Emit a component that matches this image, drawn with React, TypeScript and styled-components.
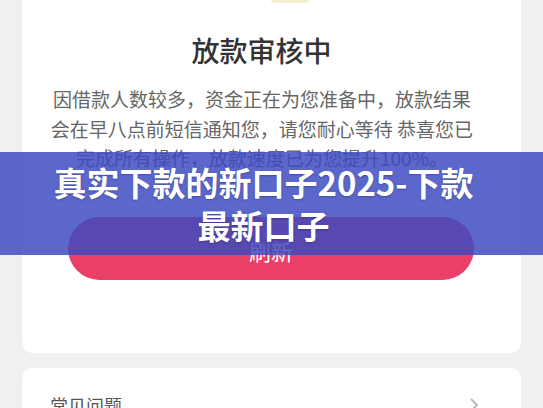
import { createGlobalStyle, styled } from "styled-components"

const GlobalStyle = createGlobalStyle`
    body {
        margin: 0;
        background: #f0f0f0;
        font-family: "Noto Sans CJK SC", "Noto Sans", sans-serif;
        overflow: hidden;
    }
`

const Page = styled.div`
    position: relative;
    width: 543px;
    height: 408px;
    overflow: hidden;
`

const Content = styled.div`
    display: flex;
    flex-direction: column;
    gap: 15px;
    padding: 0 22px;
`

const Card = styled.div`
    background: #fff;
    border-radius: 0 0 10px 10px;
    display: flex;
    flex-direction: column;
    align-items: center;
    padding: 0 0 73px;
`

const IconTail = styled.div`
    width: 38px;
    height: 3px;
    margin-left: 36px;
    border-radius: 0 0 19px 19px;
    background: #f4efd2;
`

const Title = styled.h1`
    margin: 28px 20px 0 0;
    font-size: 28px;
    line-height: 39px;
    font-weight: 500;
    color: #333;
`

const Desc = styled.p`
    margin: 14px 0 0;
    padding: 0 46px 0 27px;
    font-size: 19px;
    line-height: 29.5px;
    color: #666;
    text-align: center;
`

const Button = styled.button`
    margin-top: 44px;
    align-self: stretch;
    margin-left: 46px;
    margin-right: 47px;
    height: 63px;
    border: none;
    border-radius: 32px;
    background: #ea4068;
    color: #fff;
    font-family: inherit;
    font-size: 22px;
    padding: 0;
    padding-top: 4px;
`

const FaqCard = styled.div`
    background: #fff;
    border-radius: 10px;
    display: flex;
    align-items: center;
    justify-content: space-between;
    padding: 24px 42px 20px 28px;
`

const FaqLabel = styled.span`
    font-size: 18px;
    line-height: 26px;
    color: #555;
`

const Banner = styled.div`
    position: absolute;
    left: 0;
    right: 0;
    top: 152px;
    height: 103px;
    background: rgba(60, 74, 192, 0.84);
    display: flex;
    align-items: center;
    justify-content: center;
    text-align: center;
    padding: 0 52px 0 36px;
    box-sizing: border-box;
`

const BannerText = styled.div`
    color: #fff;
    font-size: 33px;
    line-height: 43px;
    font-weight: 700;
    text-shadow: 0 1px 2px rgba(0, 0, 0, 0.25);
`

export default function App() {
    return (
        <Page>
            <GlobalStyle />
            <Content>
                <Card>
                    <IconTail />
                    <Title>放款审核中</Title>
                    <Desc>
                        因借款人数较多，资金正在为您准备中，放款结果会在早八点前短信通知您，请您耐心等待 恭喜您已完成所有操作，放款速度已为您提升100%。
                    </Desc>
                    <Button>刷新</Button>
                </Card>
                <FaqCard>
                    <FaqLabel>常见问题</FaqLabel>
                    <svg width="10" height="16" viewBox="0 0 10 16">
                        <path d="M2 2l6 6-6 6" fill="none" stroke="#bbb" strokeWidth="2" />
                    </svg>
                </FaqCard>
            </Content>
            <Banner>
                <BannerText>真实下款的新口子2025-下款<br />最新口子</BannerText>
            </Banner>
        </Page>
    )
}
